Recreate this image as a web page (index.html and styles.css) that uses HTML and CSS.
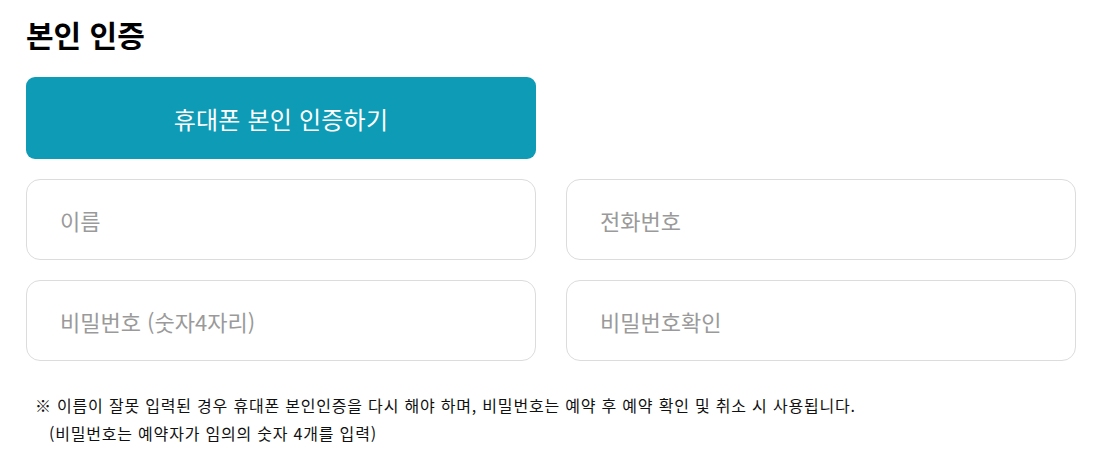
FILE: index.html
```html
<!DOCTYPE html>
<html lang="ko">
<head>
<meta charset="utf-8">
<link rel="stylesheet" href="styles.css">
</head>
<body>
<div class="page">
  <h2 class="title">본인 인증</h2>
  <div class="btn-row">
    <button class="verify-btn">휴대폰 본인 인증하기</button>
  </div>
  <div class="grid">
    <input class="field" placeholder="이름">
    <input class="field" placeholder="전화번호">
    <input class="field" placeholder="비밀번호 (숫자4자리)">
    <input class="field" placeholder="비밀번호확인">
  </div>
  <p class="note">※ 이름이 잘못 입력된 경우 휴대폰 본인인증을 다시 해야 하며, 비밀번호는 예약 후 예약 확인 및 취소 시 사용됩니다.<br><span class="indent">(비밀번호는 예약자가 임의의 숫자 4개를 입력)</span></p>
</div>
</body>
</html>
```
FILE: styles.css
```css
* { box-sizing: border-box; }
body {
  margin: 0;
  background: #fff;
  font-family: "Noto Sans CJK KR", "Noto Sans", sans-serif;
  color: #000;
}
.page {
  padding: 12px 35px 0 26px;
}
.title {
  margin: 0;
  font-size: 30px;
  font-weight: 700;
  line-height: 44px;
}
.btn-row {
  margin-top: 21px;
  display: grid;
  grid-template-columns: 510px;
}
.verify-btn {
  height: 82px;
  border: none;
  border-radius: 9px;
  background: #0e9bb6;
  color: #fff;
  font-family: inherit;
  font-size: 24px;
  letter-spacing: 0.2px;
  font-weight: 400;
}
.grid {
  margin-top: 20px;
  display: grid;
  grid-template-columns: 510px 510px;
  column-gap: 30px;
  row-gap: 20px;
}
.field {
  height: 81px;
  border: 1px solid #dcdcdc;
  border-radius: 14px;
  padding: 0 0 0 33px;
  font-family: inherit;
  font-size: 22px;
  color: #333;
  outline: none;
}
.field::placeholder { color: #9a9a9a; }
.note {
  margin: 30px 0 0 9px;
  font-size: 16px;
  line-height: 28px;
  letter-spacing: 0.8px;
  color: #111;
}
.indent { padding-left: 14px; }
```
